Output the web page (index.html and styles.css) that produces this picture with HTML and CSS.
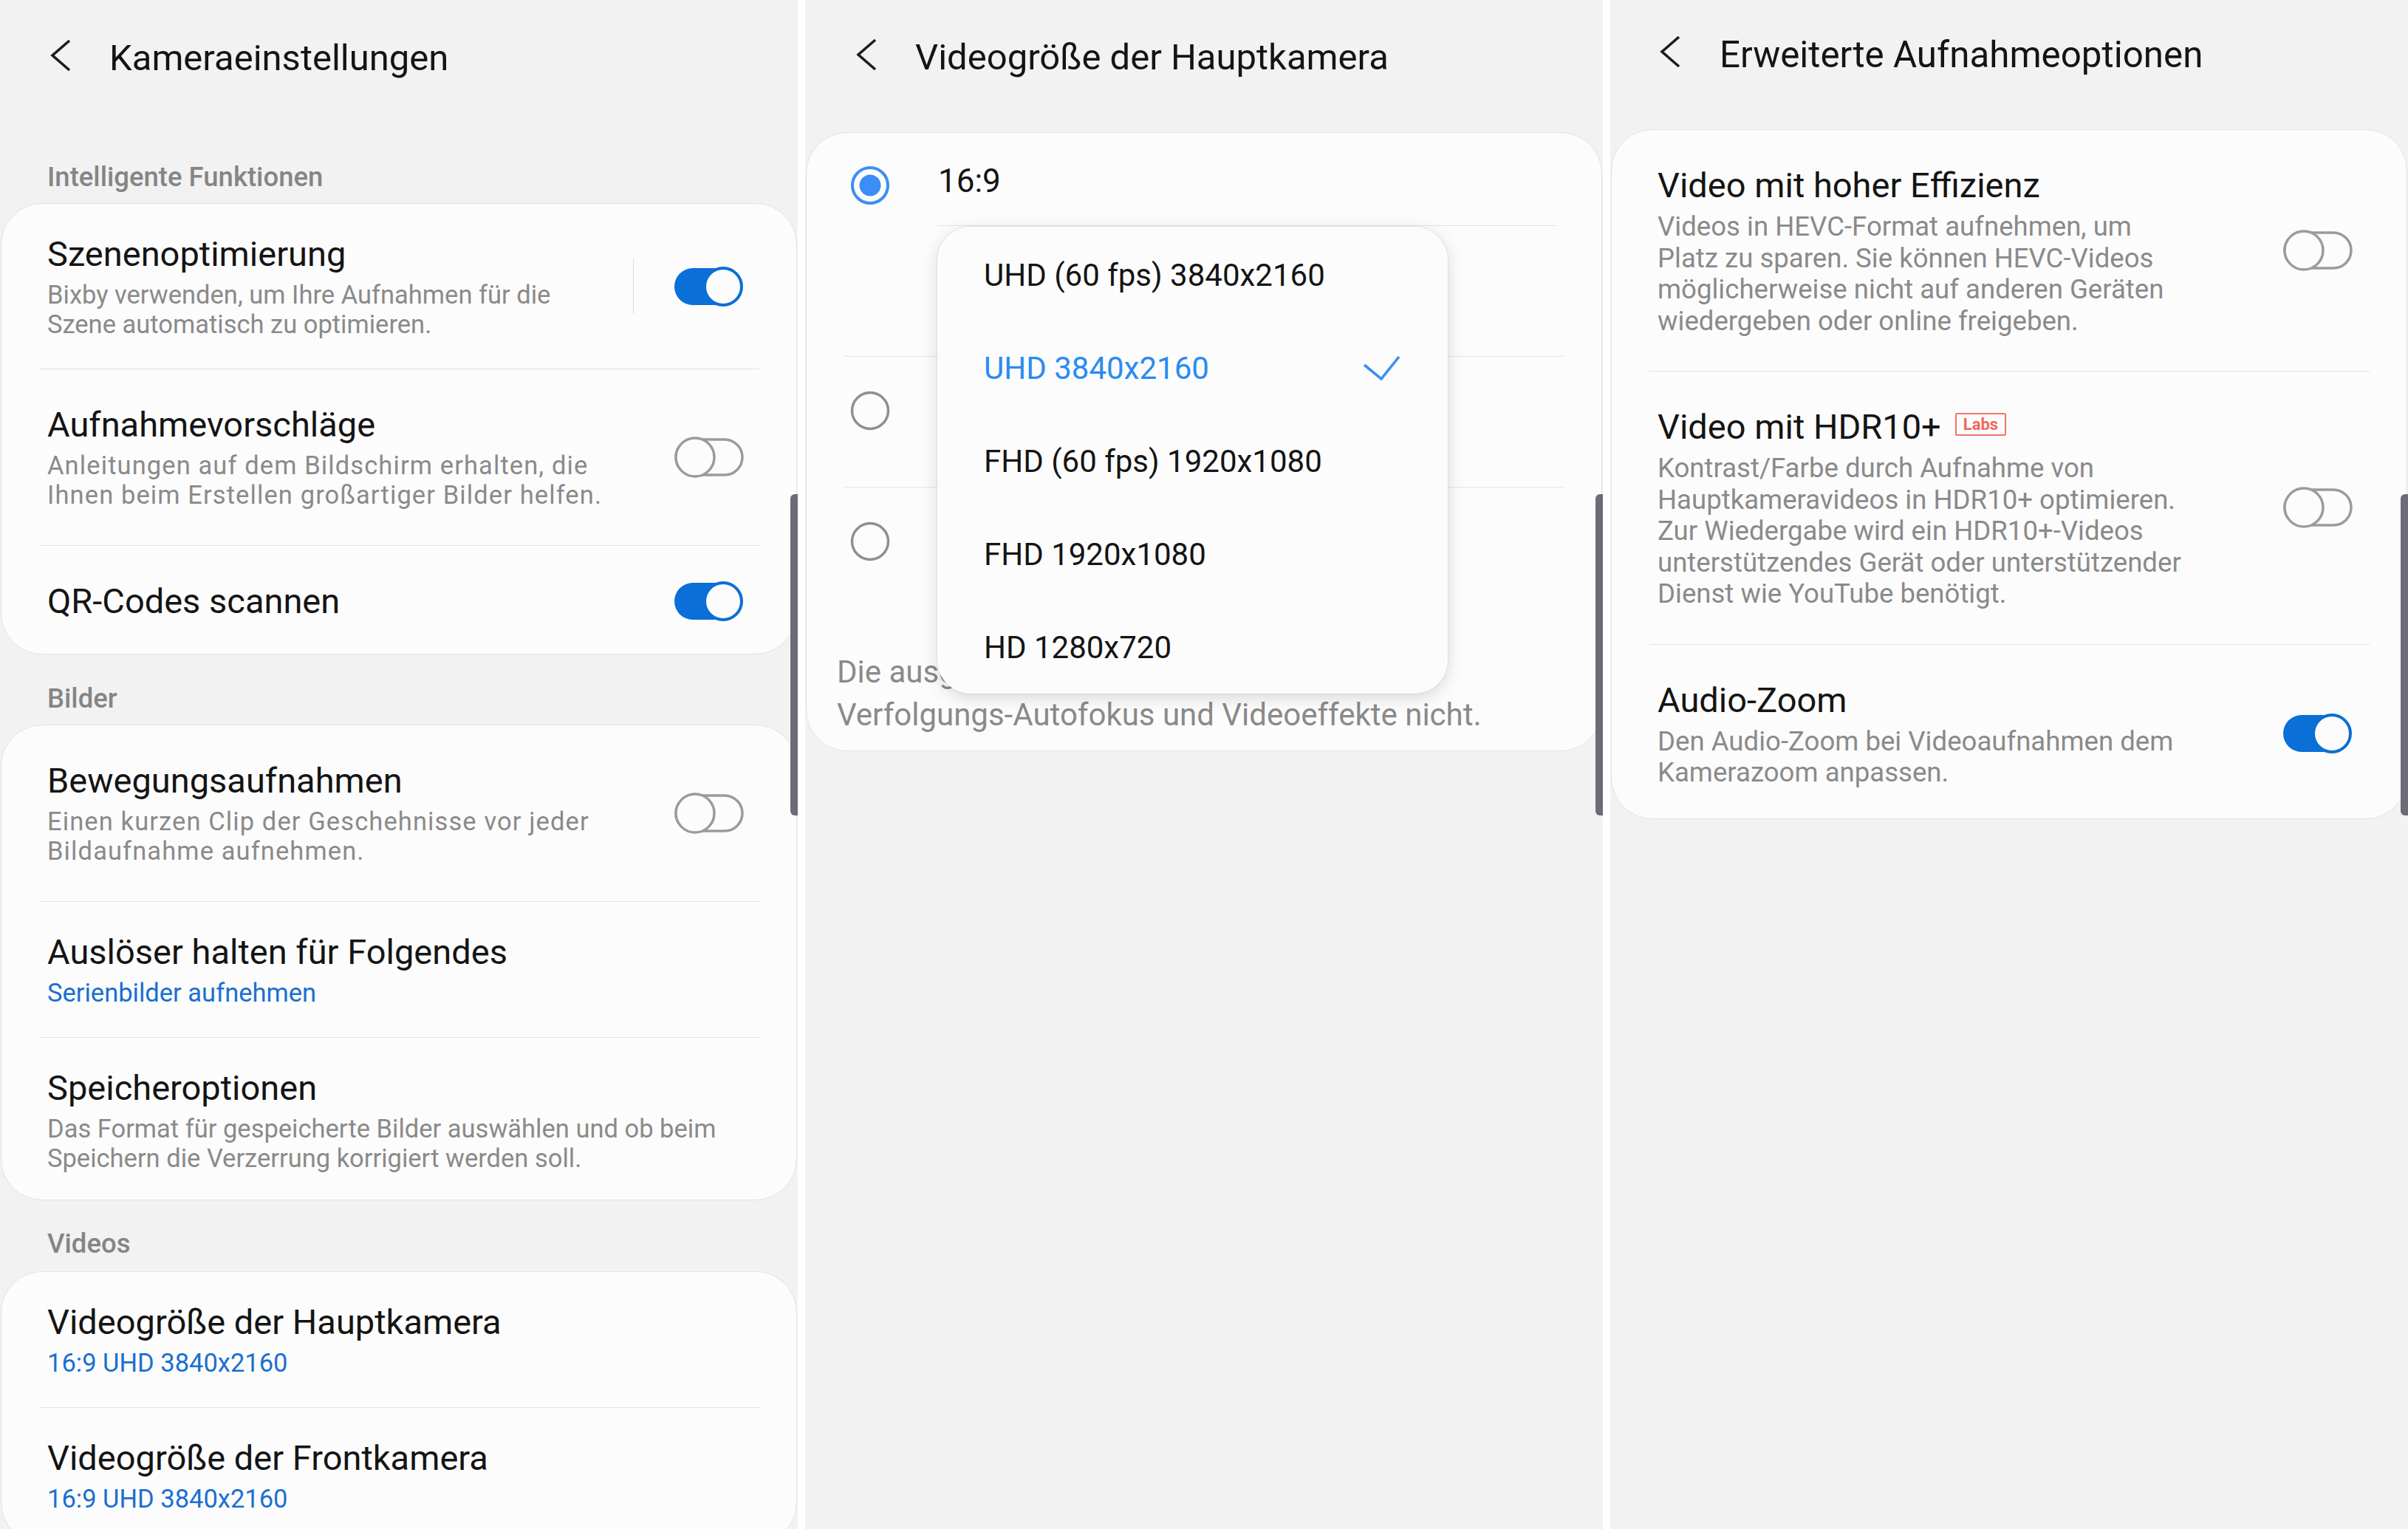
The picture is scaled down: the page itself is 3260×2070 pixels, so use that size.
FILE: index.html
```html
<!DOCTYPE html>
<html lang="de">
<head>
<meta charset="utf-8">
<title>Kameraeinstellungen</title>
<link rel="stylesheet" href="styles.css">
</head>
<body>
<div class="screen">

  <!-- Panel 1 -->
  <section class="panel p1">
    <header class="topbar">
      <svg class="back" viewBox="0 0 30 46"><polyline points="27,3 4,23 27,43" fill="none" stroke="#1c1c1c" stroke-width="3.6"/></svg>
      <h1 class="title">Kameraeinstellungen</h1>
    </header>

    <h2 class="section">Intelligente Funktionen</h2>
    <div class="card">
      <div class="item compact">
        <div class="text">
          <div class="item-title">Szenenoptimierung</div>
          <div class="item-sub">Bixby verwenden, um Ihre Aufnahmen für die<br>Szene automatisch zu optimieren.</div>
        </div>
        <span class="vdiv"></span>
        <svg class="toggle" viewBox="0 0 96 58"><rect x="1" y="4" width="80" height="50" rx="25" fill="#0a6fd6"/><circle cx="67" cy="29" r="25" fill="#fcfcfc" stroke="#0a6fd6" stroke-width="4"/></svg>
      </div>
      <div class="sep"></div>
      <div class="item roomy">
        <div class="text">
          <div class="item-title">Aufnahmevorschläge</div>
          <div class="item-sub wide">Anleitungen auf dem Bildschirm erhalten, die<br>Ihnen beim Erstellen großartiger Bilder helfen.</div>
        </div>
        <svg class="toggle" viewBox="0 0 96 58"><rect x="3" y="5" width="90" height="48" rx="24" fill="none" stroke="#9b9b9b" stroke-width="3.5"/><circle cx="29" cy="29" r="26" fill="#fcfcfc" stroke="#9b9b9b" stroke-width="3.5"/></svg>
      </div>
      <div class="sep"></div>
      <div class="item single">
        <div class="text">
          <div class="item-title">QR-Codes scannen</div>
        </div>
        <svg class="toggle" viewBox="0 0 96 58"><rect x="1" y="4" width="80" height="50" rx="25" fill="#0a6fd6"/><circle cx="67" cy="29" r="25" fill="#fcfcfc" stroke="#0a6fd6" stroke-width="4"/></svg>
      </div>
    </div>

    <h2 class="section next">Bilder</h2>
    <div class="card">
      <div class="item roomy">
        <div class="text">
          <div class="item-title">Bewegungsaufnahmen</div>
          <div class="item-sub wide">Einen kurzen Clip der Geschehnisse vor jeder<br>Bildaufnahme aufnehmen.</div>
        </div>
        <svg class="toggle" viewBox="0 0 96 58"><rect x="3" y="5" width="90" height="48" rx="24" fill="none" stroke="#9b9b9b" stroke-width="3.5"/><circle cx="29" cy="29" r="26" fill="#fcfcfc" stroke="#9b9b9b" stroke-width="3.5"/></svg>
      </div>
      <div class="sep"></div>
      <div class="item compact">
        <div class="text">
          <div class="item-title">Auslöser halten für Folgendes</div>
          <div class="item-sub link">Serienbilder aufnehmen</div>
        </div>
      </div>
      <div class="sep"></div>
      <div class="item compact end">
        <div class="text">
          <div class="item-title">Speicheroptionen</div>
          <div class="item-sub">Das Format für gespeicherte Bilder auswählen und ob beim<br>Speichern die Verzerrung korrigiert werden soll.</div>
        </div>
      </div>
    </div>

    <h2 class="section videos">Videos</h2>
    <div class="card">
      <div class="item compact">
        <div class="text">
          <div class="item-title">Videogröße der Hauptkamera</div>
          <div class="item-sub link">16:9 UHD 3840x2160</div>
        </div>
      </div>
      <div class="sep"></div>
      <div class="item compact">
        <div class="text">
          <div class="item-title">Videogröße der Frontkamera</div>
          <div class="item-sub link">16:9 UHD 3840x2160</div>
        </div>
      </div>
    </div>

    <div class="scrollbar"></div>
  </section>

  <!-- Panel 2 -->
  <section class="panel p2">
    <header class="topbar">
      <svg class="back" viewBox="0 0 30 46"><polyline points="27,3 4,23 27,43" fill="none" stroke="#1c1c1c" stroke-width="3.6"/></svg>
      <h1 class="title">Videogröße der Hauptkamera</h1>
    </header>

    <div class="card">
      <div class="opt">
        <svg class="radio" viewBox="0 0 58 58"><circle cx="29" cy="29" r="24" fill="none" stroke="#3b8ef5" stroke-width="4"/><circle cx="29" cy="29" r="14.5" fill="#3b8ef5"/></svg>
        <div class="opt-body">
          <div class="opt-label">16:9</div>
          <div class="opt-line"></div>
          <div class="opt-sub"></div>
        </div>
      </div>
      <div class="sep"></div>
      <div class="opt row">
        <svg class="radio" viewBox="0 0 58 58"><circle cx="29" cy="29" r="24.5" fill="none" stroke="#8f8f8f" stroke-width="3.5"/></svg>
      </div>
      <div class="sep"></div>
      <div class="opt row">
        <svg class="radio" viewBox="0 0 58 58"><circle cx="29" cy="29" r="24.5" fill="none" stroke="#8f8f8f" stroke-width="3.5"/></svg>
      </div>
      <p class="note">Die ausgewählte Videogröße unterstützt<br>Verfolgungs-Autofokus und Videoeffekte nicht.</p>
    </div>

    <div class="menu">
      <div class="menu-item">UHD (60 fps) 3840x2160</div>
      <div class="menu-item selected">UHD 3840x2160
        <svg class="check" viewBox="0 0 51 36"><polyline points="2,14 25,33 49,3" fill="none" stroke="#3b8ef5" stroke-width="3.6"/></svg>
      </div>
      <div class="menu-item">FHD (60 fps) 1920x1080</div>
      <div class="menu-item">FHD 1920x1080</div>
      <div class="menu-item">HD 1280x720</div>
    </div>

    <div class="scrollbar"></div>
  </section>

  <!-- Panel 3 -->
  <section class="panel p3">
    <header class="topbar">
      <svg class="back" viewBox="0 0 30 46"><polyline points="27,3 4,23 27,43" fill="none" stroke="#1c1c1c" stroke-width="3.6"/></svg>
      <h1 class="title">Erweiterte Aufnahmeoptionen</h1>
    </header>

    <div class="card">
      <div class="item">
        <div class="text">
          <div class="item-title">Video mit hoher Effizienz</div>
          <div class="item-sub">Videos in HEVC-Format aufnehmen, um<br>Platz zu sparen. Sie können HEVC-Videos<br>möglicherweise nicht auf anderen Geräten<br>wiedergeben oder online freigeben.</div>
        </div>
        <svg class="toggle" viewBox="0 0 96 58"><rect x="3" y="5" width="90" height="48" rx="24" fill="none" stroke="#9b9b9b" stroke-width="3.5"/><circle cx="29" cy="29" r="26" fill="#fcfcfc" stroke="#9b9b9b" stroke-width="3.5"/></svg>
      </div>
      <div class="sep"></div>
      <div class="item">
        <div class="text">
          <div class="item-title">Video mit HDR10+<span class="labs">Labs</span></div>
          <div class="item-sub">Kontrast/Farbe durch Aufnahme von<br>Hauptkameravideos in HDR10+ optimieren.<br>Zur Wiedergabe wird ein HDR10+-Videos<br>unterstützendes Gerät oder unterstützender<br>Dienst wie YouTube benötigt.</div>
        </div>
        <svg class="toggle" viewBox="0 0 96 58"><rect x="3" y="5" width="90" height="48" rx="24" fill="none" stroke="#9b9b9b" stroke-width="3.5"/><circle cx="29" cy="29" r="26" fill="#fcfcfc" stroke="#9b9b9b" stroke-width="3.5"/></svg>
      </div>
      <div class="sep"></div>
      <div class="item last">
        <div class="text">
          <div class="item-title">Audio-Zoom</div>
          <div class="item-sub">Den Audio-Zoom bei Videoaufnahmen dem<br>Kamerazoom anpassen.</div>
        </div>
        <svg class="toggle" viewBox="0 0 96 58"><rect x="1" y="4" width="80" height="50" rx="25" fill="#0a6fd6"/><circle cx="67" cy="29" r="25" fill="#fcfcfc" stroke="#0a6fd6" stroke-width="4"/></svg>
      </div>
    </div>

    <div class="scrollbar"></div>
  </section>

</div>
</body>
</html>
```

FILE: styles.css
```css
* { box-sizing: border-box; }

html, body {
  margin: 0;
  background: #ffffff;
}

body {
  font-family: Roboto, "Noto Sans", "Liberation Sans", sans-serif;
  color: #151515;
  overflow: hidden;
}

.screen {
  display: flex;
  gap: 10px;
  width: 3260px;
  height: 2070px;
  overflow: hidden;
  background: #ffffff;
}

.panel {
  position: relative;
  flex: 0 0 1080px;
  height: 2070px;
  padding: 0 1px;
  background: #f2f2f2;
  overflow: hidden;
}

/* ---------- top bar ---------- */
.topbar {
  display: flex;
  align-items: center;
  height: 60px;
  margin-top: 49px;
  padding-left: 66px;
}

.back {
  flex: none;
  width: 30px;
  height: 46px;
  margin-bottom: 8px;
}

.title {
  margin: 0 0 0 51px;
  font-size: 49px;
  font-weight: 400;
  line-height: 60px;
  color: #141414;
  white-space: nowrap;
}

/* ---------- section labels ---------- */
.section {
  margin: 110px 0 14px;
  padding-left: 63px;
  font-size: 36.5px;
  font-weight: 500;
  line-height: 42px;
  color: #858585;
}
.section.next { margin-top: 39px; }
.section.videos { margin-top: 38px; margin-bottom: 16px; }

/* ---------- cards & rows ---------- */
.card {
  background: #fcfcfc;
  border: 1px solid #e3e3e3;
  border-radius: 56px;
}

.item {
  display: flex;
  align-items: center;
  padding: 40px 70px 40px 62px;
}
.item.roomy { padding-top: 47px; padding-bottom: 48px; }
.item.single { padding-top: 46px; padding-bottom: 42px; }
.item.end { padding-bottom: 36px; }

.text {
  flex: 1;
  min-width: 0;
}

.item-title {
  font-size: 47px;
  line-height: 56px;
  color: #141414;
  white-space: nowrap;
}

.item-sub {
  margin-top: 7px;
  font-size: 34.5px;
  line-height: 40px;
  color: #8a8a8a;
  white-space: nowrap;
}
.item-sub.wide { letter-spacing: 1.1px; }
.item-sub.link { color: #1b6fd0; }

.sep {
  height: 1px;
  margin: 0 50px 0 51px;
  background: #e2e2e2;
}

.vdiv {
  flex: none;
  width: 1px;
  height: 75px;
  margin-right: 54px;
  background: #dcdcdc;
}

.toggle {
  flex: none;
  width: 96px;
  height: 58px;
}

.scrollbar {
  position: absolute;
  right: 0;
  top: 669px;
  width: 10px;
  height: 435px;
  border-radius: 6px 0 0 6px;
  background: #6d6b76;
}

/* ---------- panel 2 ---------- */
.p2 .topbar { margin-top: 48px; padding-left: 67px; }
.p2 .card { margin-top: 71px; }
.p2 .sep { margin: 0 51px; }

.opt {
  display: flex;
  align-items: flex-start;
}
.opt.row { height: 176px; }

.radio {
  flex: none;
  width: 58px;
  height: 58px;
  margin: 42px 0 0 57px;
}
.opt.row .radio { margin-top: 44px; }

.opt-body {
  flex: 1;
  margin-left: 61px;
}

.opt-label {
  padding: 37px 0 32px 2px;
  font-size: 44px;
  line-height: 56px;
  color: #141414;
}

.opt-line {
  height: 1px;
  margin-right: 61px;
  background: #e2e2e2;
}

.opt-sub { height: 176px; }

.note {
  margin: 0;
  padding: 45px 40px 19px 41px;
  font-size: 42px;
  line-height: 58px;
  color: #8a8a8a;
  white-space: nowrap;
}

.menu {
  position: absolute;
  left: 179px;
  top: 307px;
  width: 691px;
  padding-top: 2px;
  background: #fcfcfc;
  border-radius: 45px;
  box-shadow: 0 6px 22px rgba(0, 0, 0, 0.14), 0 0 0 1px rgba(0, 0, 0, 0.05);
}

.menu-item {
  display: flex;
  align-items: center;
  justify-content: space-between;
  height: 126px;
  padding: 0 64px 0 63px;
  font-size: 42px;
  color: #141414;
  white-space: nowrap;
}
.menu-item.selected { color: #2a8bf2; }

.check {
  flex: none;
  width: 51px;
  height: 36px;
}

/* ---------- panel 3 ---------- */
.p3 .topbar { margin-top: 44px; padding-left: 65px; }
.p3 .title { font-size: 49.3px; margin-left: 52px; }
.p3 .card { margin-top: 71px; }

.p3 .item { padding: 46px 72px 46px 62px; }
.p3 .item.last { padding-bottom: 40px; }
.p3 .item-title { font-size: 47px; line-height: 58px; }
.p3 .item-sub {
  margin-top: 6px;
  font-size: 36.6px;
  line-height: 42.5px;
}

.labs {
  display: inline-block;
  margin-left: 19px;
  padding: 0 9px;
  border: 2px solid #f2766b;
  border-radius: 2px;
  font-size: 22px;
  font-weight: 700;
  line-height: 27px;
  color: #f0675b;
  vertical-align: 12px;
}
```
